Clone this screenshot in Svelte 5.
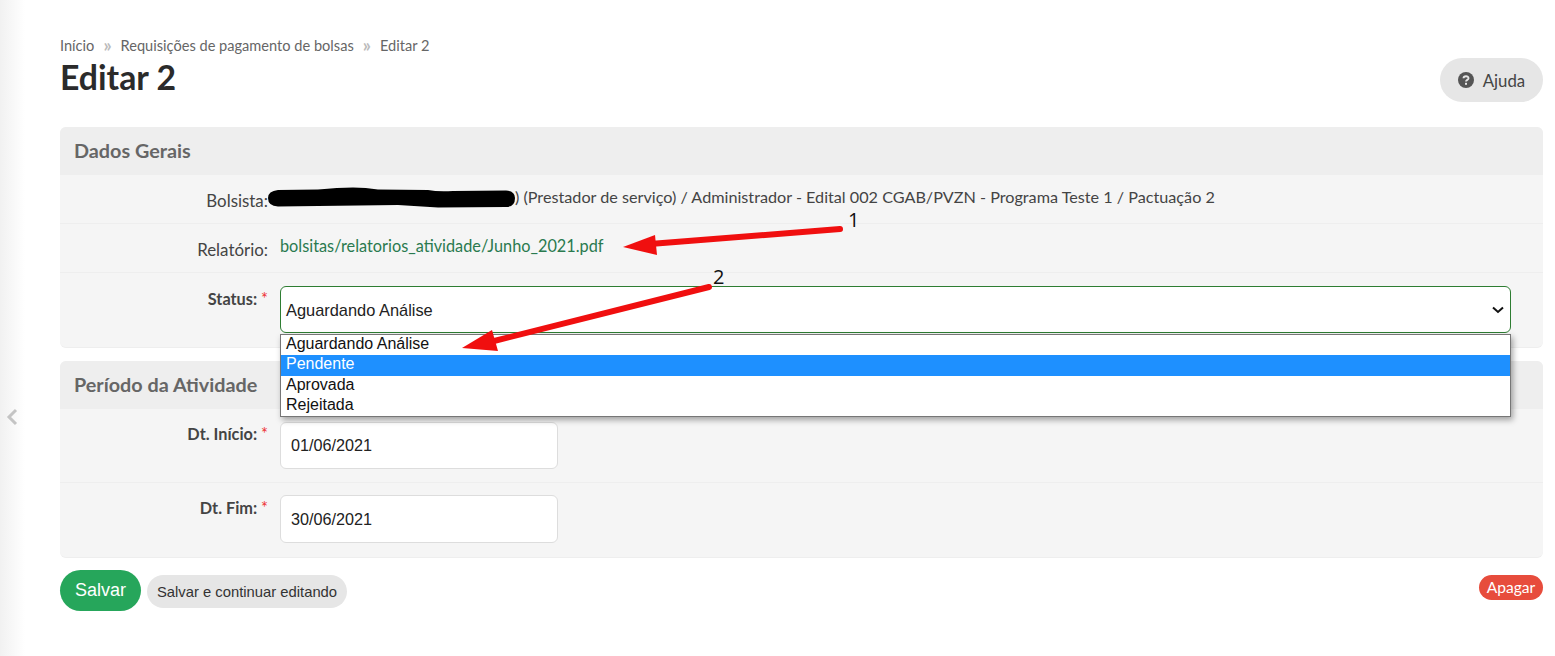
<script>
  const options = ["Aguardando Análise", "Pendente", "Aprovada", "Rejeitada"];
</script>

<div class="page">
  <aside class="toggle">
    <svg class="chevron" width="14" height="18" viewBox="0 0 14 18">
      <path d="M11 2 L4 9 L11 16" fill="none" stroke="#c4c4c4" stroke-width="3" />
    </svg>
  </aside>

  <main>
    <header class="top">
      <div>
        <nav class="crumbs">
          <span>Início</span><i>»</i><span>Requisições de pagamento de bolsas</span><i>»</i><span>Editar 2</span>
        </nav>
        <h1>Editar 2</h1>
      </div>
      <button class="help">
        <svg width="16" height="16" viewBox="0 0 16 16">
          <circle cx="8" cy="8" r="8" fill="#555" />
          <path d="M5.5 6.2 C5.6 3.6 10.5 3.5 10.5 6.2 C10.5 8 8 7.8 8 9.6" fill="none" stroke="#e6e6e6" stroke-width="1.9" />
          <rect x="7" y="10.8" width="2" height="2" fill="#e6e6e6" />
        </svg>
        Ajuda
      </button>
    </header>

    <section class="panel">
      <h2>Dados Gerais</h2>
      <div class="row short">
        <div class="label">Bolsista:</div>
        <div class="value bolsista">
          <svg class="blot" width="247" height="22" viewBox="0 0 247 22">
            <path d="M10 3 L50 2.5 Q70 0.5 85 0.5 Q98 0.5 110 2.5 L160 3 Q170 5 185 4 L238 3.5 Q247 4 247 11 Q247 20 238 20 L170 20.5 Q150 19 130 18 L50 19 L10 19.5 Q0 19 0 11 Q0 4 10 3 Z" fill="#000" />
          </svg>
          <span>) (Prestador de serviço) / Administrador - Edital 002 CGAB/PVZN - Programa Teste 1 / Pactuação 2</span>
        </div>
      </div>
      <div class="row short">
        <div class="label">Relatório:</div>
        <a class="value link" href="#top">bolsitas/relatorios_atividade/Junho_2021.pdf</a>
      </div>
      <div class="row status">
        <div class="label req">Status: <em>*</em></div>
        <div class="select">
          <span>Aguardando Análise</span>
          <svg width="12" height="8" viewBox="0 0 12 8">
            <path d="M1 1.5 L6 6 L11 1.5" fill="none" stroke="#111" stroke-width="2" />
          </svg>
          <ul class="dropdown">
            {#each options as opt, i}
              <li class:active={i === 1}>{opt}</li>
            {/each}
          </ul>
        </div>
      </div>
    </section>

    <section class="panel last">
      <h2>Período da Atividade</h2>
      <div class="row date">
        <div class="label req">Dt. Início: <em>*</em></div>
        <div class="input">01/06/2021</div>
      </div>
      <div class="row date end">
        <div class="label req">Dt. Fim: <em>*</em></div>
        <div class="input">30/06/2021</div>
      </div>
    </section>

    <footer class="actions">
      <button class="save">Salvar</button>
      <button class="cont">Salvar e continuar editando</button>
      <button class="del">Apagar</button>
    </footer>
  </main>

  <!-- setas e numeros desenhados por cima do print -->
  <svg class="notes" width="1555" height="656" viewBox="0 0 1555 656">
    <path d="M840 229 L650 244" stroke="#f00f0f" stroke-width="6" stroke-linecap="round" />
    <path d="M655 235 L623 247 L657 255 Z" fill="#f00f0f" />
    <path d="M709 287 L490 342" stroke="#f00f0f" stroke-width="6" stroke-linecap="round" />
    <path d="M492 330 L462 348 L498 351 Z" fill="#f00f0f" />
  </svg>
  <span class="num one">1</span>
  <span class="num two">2</span>
</div>

<style>
  :global(body) {
    margin: 0;
    background: #fff;
  }

  .page {
    display: flex;
    width: 1555px;
    height: 656px;
    overflow: hidden;
    position: relative;
    font-family: Lato, "Liberation Sans", sans-serif;
    color: #333;
  }

  .toggle {
    flex: 0 0 25px;
    background: linear-gradient(to right, #f1f1f1, #fff);
    display: flex;
    align-items: center;
    padding: 184px 0 7px 5px;
    box-sizing: border-box;
    height: 656px;
  }

  main {
    flex: 0 0 1483px;
    margin-left: 35px;
    padding-top: 36px;
  }

  .top {
    display: flex;
    justify-content: space-between;
    align-items: flex-start;
    height: 91px;
  }

  .crumbs {
    font-size: 14.6px;
    line-height: 19px;
    color: #666;
    display: flex;
    align-items: center;
  }

  .crumbs i {
    font-style: normal;
    color: #bbb;
    margin: 0 9px;
    font-size: 18px;
    line-height: 19px;
    font-weight: 700;
  }

  h1 {
    margin: 2px 0 0;
    font-size: 33.8px;
    line-height: 40px;
    font-weight: 700;
    color: #2b2b2b;
  }

  .help {
    margin-top: 22px;
    width: 103px;
    height: 44px;
    border: 0;
    border-radius: 22px;
    background: #e6e6e6;
    display: flex;
    align-items: center;
    justify-content: center;
    gap: 9px;
    font: 16.8px Lato, sans-serif;
    color: #444;
    padding: 0;
  }

  .panel {
    background: #f5f5f5;
    border-radius: 6px;
    margin-bottom: 13px;
    border-bottom: 1px solid #eee;
  }

  .last {
    margin-bottom: 12px;
  }

  h2 {
    margin: 0;
    height: 48px;
    line-height: 47px;
    padding-left: 14px;
    background: #eee;
    border-radius: 6px 6px 0 0;
    font-size: 19.8px;
    font-weight: 700;
    color: #666;
  }

  .row {
    display: flex;
    gap: 12px;
    border-bottom: 1px solid #eee;
    font-size: 16.2px;
    box-sizing: border-box;
  }

  .row:last-child {
    border-bottom: 0;
  }

  .label {
    flex: 0 0 208px;
    text-align: right;
    color: #444;
    font-size: 16.9px;
  }

  .short {
    height: 49px;
  }

  .short .label {
    padding-top: 16px;
    line-height: 20px;
  }

  .value {
    padding-top: 12px;
    line-height: 20px;
    color: #444;
  }

  .bolsista {
    margin-left: -12px;
    display: flex;
    align-items: flex-start;
    white-space: pre;
  }

  .blot {
    margin-top: 0;
  }

  .link {
    color: #2a7a4f;
    font-size: 16.3px;
    text-decoration: none;
  }

  .label.req {
    font-weight: 700;
    color: #444;
    font-size: 16.3px;
    padding-top: 15px;
    line-height: 20px;
  }

  .status .label.req {
    padding-top: 16px;
  }

  .req em {
    color: #e33;
    font-style: normal;
    font-weight: 400;
  }

  .status {
    height: 74px;
  }

  .select {
    position: relative;
    margin-top: 13px;
    width: 1231px;
    height: 47px;
    box-sizing: border-box;
    border: 1px solid #2e7d32;
    border-radius: 6px;
    background: #fff;
    display: flex;
    align-items: center;
    justify-content: space-between;
    padding: 2px 6px 0 5px;
    font: 16.4px "Liberation Sans", sans-serif;
    color: #222;
  }

  .select svg {
    margin-top: -2px;
  }

  .dropdown {
    position: absolute;
    left: -1px;
    top: 47px;
    width: 1231px;
    box-sizing: border-box;
    margin: 0;
    padding: 0;
    list-style: none;
    background: #fff;
    border: 1px solid #767676;
    box-shadow: 2px 3px 6px rgba(0, 0, 0, 0.35);
    z-index: 2;
    height: 83px;
    font-size: 16px;
  }

  .dropdown li {
    height: 20.25px;
    line-height: 18px;
    padding-left: 5px;
    color: #111;
  }

  .dropdown .active {
    background: #1e90ff;
    color: #fff;
  }

  .date {
    height: 74px;
  }

  .input {
    margin-top: 13px;
    width: 278px;
    height: 47px;
    box-sizing: border-box;
    border: 1px solid #ddd;
    border-radius: 6px;
    background: #fff;
    padding-left: 10px;
    font: 16.2px/45px "Liberation Sans", sans-serif;
    color: #222;
  }

  .end .input {
    margin-top: 12px;
    height: 48px;
    line-height: 47px;
  }

  .actions {
    display: flex;
    align-items: center;
    gap: 6px;
    height: 41px;
  }

  .actions button {
    border: 0;
    padding: 0;
    font-family: "Liberation Sans", sans-serif;
  }

  .save {
    width: 81px;
    height: 41px;
    border-radius: 21px;
    background: #26a65b;
    color: #fff;
    font-size: 18px;
  }

  .actions .cont {
    width: 200px;
    height: 33px;
    margin-top: 1px;
    padding-top: 2px;
    border-radius: 17px;
    background: #e6e6e6;
    color: #333;
    font-size: 14.8px;
  }

  .actions .del {
    margin-left: auto;
    margin-top: -7px;
    width: 64px;
    height: 25px;
    border-radius: 13px;
    background: #e74c3c;
    color: #fff;
    font-family: Lato, sans-serif;
    font-size: 15.6px;
  }

  .notes {
    position: absolute;
    left: 0;
    top: 0;
    pointer-events: none;
    z-index: 3;
  }

  .num {
    position: absolute;
    z-index: 3;
    font: 20px "Open Sans", sans-serif;
    color: #111;
  }

  .one {
    left: 848px;
    top: 206px;
  }

  .two {
    left: 713px;
    top: 263px;
  }
</style>
